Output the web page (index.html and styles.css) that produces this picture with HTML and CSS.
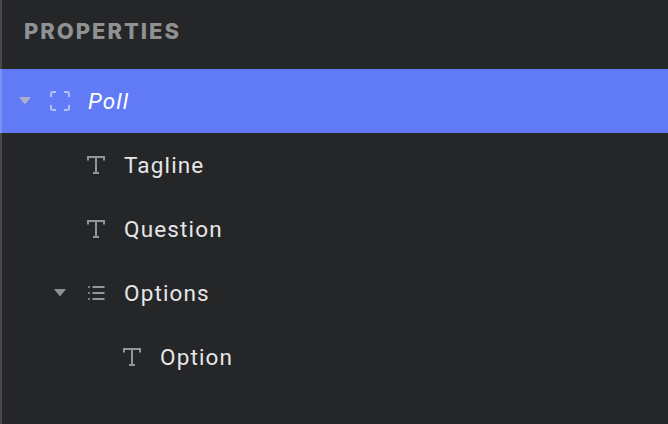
FILE: index.html
```html
<!DOCTYPE html>
<html lang="en">
<head>
<meta charset="utf-8">
<title>Properties</title>
<link rel="stylesheet" href="styles.css">
</head>
<body>
<aside class="panel">
  <h2 class="title">PROPERTIES</h2>
  <ul class="tree">
    <li class="row selected">
      <svg class="caret" width="12" height="8" viewBox="0 0 12 8"><path d="M0 0h12L6 7.500z"/></svg>
      <svg class="icon frame" width="20" height="20" viewBox="0 0 20 20"><path d="M1 6V3a2 2 0 0 1 2-2h3M14 1h3a2 2 0 0 1 2 2v3M19 14v3a2 2 0 0 1-2 2h-3M6 19H3a2 2 0 0 1-2-2v-3"/></svg>
      <span class="label em">Poll</span>
    </li>
    <li class="row lvl1">
      <span class="caret-space"></span>
      <svg class="icon ticon" width="18" height="18" viewBox="0 0 18 18"><path d="M1 4.500V1h16v3.500M9 1V17M6 17h6"/></svg>
      <span class="label">Tagline</span>
    </li>
    <li class="row lvl1">
      <span class="caret-space"></span>
      <svg class="icon ticon" width="18" height="18" viewBox="0 0 18 18"><path d="M1 4.500V1h16v3.500M9 1V17M6 17h6"/></svg>
      <span class="label">Question</span>
    </li>
    <li class="row lvl1">
      <svg class="caret" width="12" height="8" viewBox="0 0 12 8"><path d="M0 0h12L6 7.500z"/></svg>
      <svg class="icon list" width="18" height="14" viewBox="0 0 18 14"><path d="M5.500 1h12M5.500 7h12M5.500 13h12"/><path class="dots" d="M1 1h2M1 7h2M1 13h2"/></svg>
      <span class="label">Options</span>
    </li>
    <li class="row lvl2">
      <span class="caret-space"></span>
      <svg class="icon ticon" width="18" height="18" viewBox="0 0 18 18"><path d="M1 4.500V1h16v3.500M9 1V17M6 17h6"/></svg>
      <span class="label">Option</span>
    </li>
  </ul>
</aside>
</body>
</html>
```
FILE: styles.css
```css
* { box-sizing: border-box; }
html, body { margin: 0; height: 100%; background: #252628; overflow: hidden; }
.panel {
  position: relative;
  height: 424px;
  background: #252628;
  font-family: Roboto, "Liberation Sans", sans-serif;
}
.panel::before {
  content: "";
  position: absolute;
  left: 0; top: 0; bottom: 0;
  width: 2px;
  background: rgba(255,255,255,0.16);
  z-index: 1;
}
.title {
  margin: 0;
  height: 69px;
  padding: 19px 0 0 24px;
  font-family: Inter, Roboto, sans-serif;
  font-size: 22px;
  line-height: 24px;
  font-weight: 800;
  letter-spacing: 1.950px;
  color: #909192;
}
.tree { list-style: none; margin: 0; padding: 0; }
.row {
  display: flex;
  align-items: center;
  height: 64px;
  padding-left: 19px;
  color: #e6e6e7;
  font-size: 22.500px;
  letter-spacing: 1.150px;
}
.row.selected { background: #617bf7; color: #fff; }
.lvl1 { padding-left: 54px; }
.lvl2 { padding-left: 90px; }
.caret { flex: none; width: 12px; height: 8px; fill: #8e8f90; margin-right: 19px; }
.selected .caret { fill: #a9b0cc; }
.caret-space { flex: none; width: 12px; margin-right: 21px; }
.icon { flex: none; fill: none; stroke-width: 2; }
.frame { width: 20px; height: 20px; stroke: #b4c0fb; margin-right: 18px; }
.ticon { stroke: #949596; margin-right: 19px; }
.list { stroke: #949596; margin: 0 19px 0 2px; }
.list .dots { stroke: #77787a; }
.label { line-height: 26px; }
.em { font-style: italic; }
```
